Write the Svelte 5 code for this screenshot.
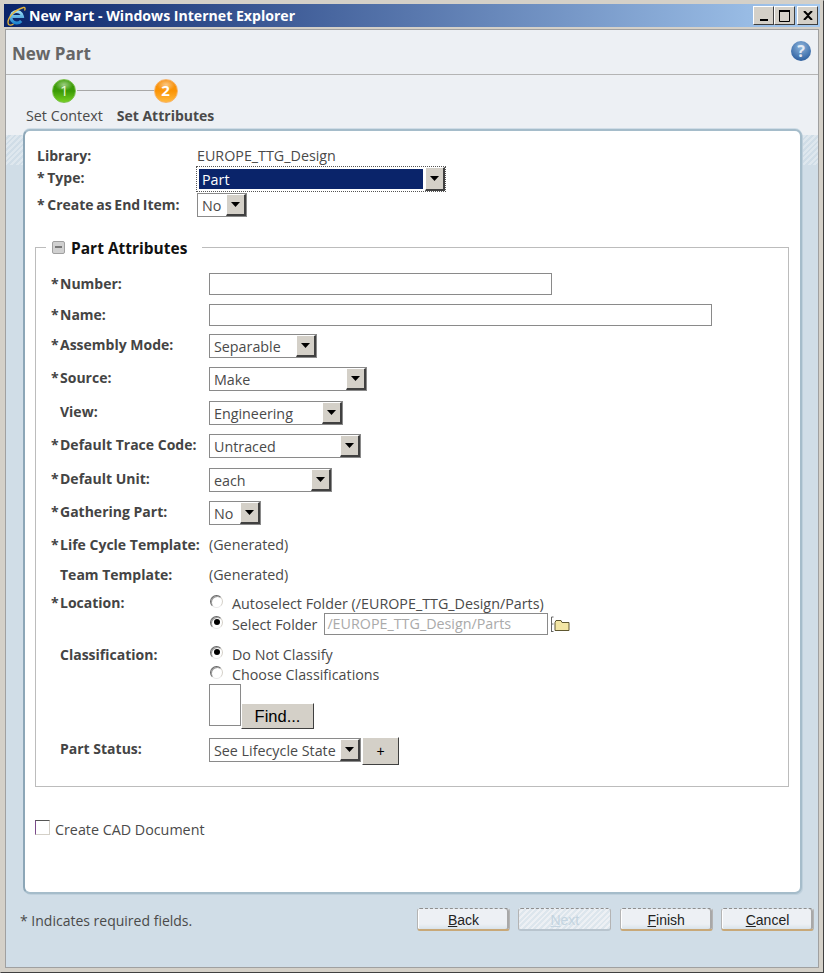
<script lang="ts">
	const attrs = [
		{ label: 'Assembly Mode:', req: true, value: 'Separable', width: 108 },
		{ label: 'Source:', req: true, value: 'Make', width: 158 },
		{ label: 'View:', req: false, value: 'Engineering', width: 134 },
		{ label: 'Default Trace Code:', req: true, value: 'Untraced', width: 152 },
		{ label: 'Default Unit:', req: true, value: 'each', width: 123 },
		{ label: 'Gathering Part:', req: true, value: 'No', width: 52 }
	];
</script>

{#snippet arrow()}
	<span class="arrow-btn"><svg width="9" height="5" viewBox="0 0 9 5"><path d="M0 0h9L4.500 5z" fill="#000" /></svg></span>
{/snippet}

{#snippet select(value: string, width: number)}
	<span class="select" style="width: {width}px"><span class="select-value">{value}</span>{@render arrow()}</span>
{/snippet}

{#snippet radio(on: boolean)}
	<span class="radio" class:on></span>
{/snippet}

<div class="window">
	<header class="titlebar">
		<svg class="ie" width="20" height="20" viewBox="0 0 20 20">
			<defs>
				<linearGradient id="ie-fill" x1="0" y1="0" x2="0" y2="1">
					<stop offset="0" stop-color="#9bdcf6" />
					<stop offset="1" stop-color="#1f86cf" />
				</linearGradient>
			</defs>
			<path d="M6 10.500h10.500A5.800 5.800 0 1 0 15.200 15" fill="none" stroke="url(#ie-fill)" stroke-width="3" />
			<path d="M2.500 18.500C0 13 8 4 17.500 1.500c2-.3 1.800 1.500 1 3M2.500 18.500c1.500 1 3.500.5 5-.5" fill="none" stroke="#e5b53c" stroke-width="1.300" />
		</svg>
		<span class="title-text">New Part - Windows Internet Explorer</span>
		<div class="win-buttons">
			<button class="win-btn" aria-label="Minimize"><svg width="10" height="11" viewBox="0 0 10 11"><path d="M1 9h8v2H1z" /></svg></button>
			<button class="win-btn" aria-label="Maximize"><svg width="12" height="12" viewBox="0 0 12 12"><path d="M.500 1.500h10v10H.500z" fill="none" stroke="#000" /><path d="M0 0h11v2H0z" /></svg></button>
			<button class="win-btn close" aria-label="Close"><svg width="10" height="9" viewBox="0 0 10 9"><path d="M1 0l4 4 4-4M1 9l4-4 4 4" fill="none" stroke="#000" stroke-width="2" /></svg></button>
		</div>
	</header>

	<div class="page">
		<div class="page-head">
			<h1>New Part</h1>
			<span class="help">?</span>
		</div>

		<div class="steps">
			<div class="step">
				<span class="ball green">1</span>
				<span class="step-label">Set Context</span>
			</div>
			<span class="step-line"></span>
			<div class="step current">
				<span class="ball orange">2</span>
				<span class="step-label">Set Attributes</span>
			</div>
		</div>

		<div class="body">
			<main class="panel">
				<div class="top-grid">
					<span class="label">Library:</span>
					<span class="text">EUROPE_TTG_Design</span>
					<span class="label pad">* Type:</span>
					<span class="focus-select"><span class="focus-value">Part</span>{@render arrow()}</span>
					<span class="label pad create">* Create as End Item:</span>
					<span class="top-select">{@render select('No', 50)}</span>
				</div>

				<fieldset class="attrs">
					<legend>
						<span class="collapse"></span>
						<span class="legend-text">Part Attributes</span>
					</legend>

					<div class="row row-input">
						<span class="label"><i>*</i>Number:</span>
						<span class="input" style="width: 343px"></span>
					</div>
					<div class="row row-input">
						<span class="label"><i>*</i>Name:</span>
						<span class="input" style="width: 503px"></span>
					</div>
					{#each attrs as attr (attr.label)}
						<div class="row row-select">
							<span class="label"><i>{attr.req ? '*' : ''}</i>{attr.label}</span>
							{@render select(attr.value, attr.width)}
						</div>
					{/each}
					<div class="row row-text first">
						<span class="label"><i>*</i>Life Cycle Template:</span>
						<span class="text">(Generated)</span>
					</div>
					<div class="row row-text">
						<span class="label"><i></i>Team Template:</span>
						<span class="text">(Generated)</span>
					</div>
					<div class="row row-location">
						<span class="label"><i>*</i>Location:</span>
						<div class="options">
							<div class="option">{@render radio(false)}<span class="text">Autoselect Folder (/EUROPE_TTG_Design/Parts)</span></div>
							<div class="option">
								{@render radio(true)}<span class="text">Select Folder</span>
								<span class="folder-input">/EUROPE_TTG_Design/Parts</span>
								<svg class="folder" width="20" height="17" viewBox="0 0 20 17">
									<path d="M.500 1v15M.500 1h2M.500 15.500h2M.500 8h2" fill="none" stroke="#666" />
									<path d="M4 6.500l1-2h5l1 2h7v8H4z" fill="#f3e6a4" stroke="#5f5730" />
								</svg>
							</div>
						</div>
					</div>
					<div class="row row-class">
						<span class="label"><i></i>Classification:</span>
						<div class="options">
							<div class="option">{@render radio(true)}<span class="text">Do Not Classify</span></div>
							<div class="option">{@render radio(false)}<span class="text">Choose Classifications</span></div>
							<div class="find">
								<span class="class-box"></span>
								<button class="raised find-btn">Find...</button>
							</div>
						</div>
					</div>
					<div class="row row-status">
						<span class="label"><i></i>Part Status:</span>
						<div class="status">
							{@render select('See Lifecycle State', 152)}
							<button class="raised plus">+</button>
						</div>
					</div>
				</fieldset>

				<div class="cad">
					<span class="checkbox"></span>
					<span class="text">Create CAD Document</span>
				</div>
			</main>

			<footer class="foot">
				<span class="note">* Indicates required fields.</span>
				<div class="actions">
					<button class="wiz-btn"><u>B</u>ack</button>
					<button class="wiz-btn off"><u>N</u>ext</button>
					<button class="wiz-btn"><u>F</u>inish</button>
					<button class="wiz-btn"><u>C</u>ancel</button>
				</div>
			</footer>
		</div>
	</div>
</div>

<style>
	:global(body) {
		margin: 0;
		background: #d4d0c8;
	}

	.window {
		width: 824px;
		height: 973px;
		box-sizing: border-box;
		display: flex;
		flex-direction: column;
		padding: 3px;
		background: #d4d0c8;
		border: 1px solid;
		border-color: #d4d0c8 #404040 #404040 #d4d0c8;
		font-family: 'Open Sans', 'Noto Sans', sans-serif;
		font-size: 14.3px;
		color: #4a4a4a;
	}

	.titlebar {
		height: 23px;
		flex: none;
		display: flex;
		align-items: center;
		background: linear-gradient(90deg, #0a246a, #a6caf0);
	}

	.ie {
		margin-left: 2px;
		flex: none;
	}

	.title-text {
		margin-left: 3px;
		font-weight: 700;
		font-size: 14.1px;
		color: #fff;
	}

	.win-buttons {
		margin-left: auto;
		margin-right: 2px;
		display: flex;
	}

	.win-btn {
		width: 21px;
		height: 19px;
		padding: 0;
		display: flex;
		align-items: center;
		justify-content: center;
		background: #d4d0c8;
		border: 1px solid;
		border-color: #fff #404040 #404040 #fff;
	}

	.close {
		margin-left: 2px;
	}

	.page {
		flex: 1;
		margin: 2px 1px 1px;
		display: flex;
		flex-direction: column;
		min-height: 0;
		background: #edf0f4;
		border: 1px solid #a0a0a0;
	}

	.page-head {
		height: 44px;
		flex: none;
		display: flex;
		align-items: center;
		justify-content: space-between;
		padding: 0 7px 0 6px;
		border-bottom: 1px solid #b4b4b4;
	}

	h1 {
		margin: 2px 0 0;
		font-size: 17px;
		font-weight: 700;
		color: #666;
	}

	.help {
		width: 20px;
		height: 20px;
		margin-bottom: 2px;
		border-radius: 50%;
		background: radial-gradient(circle at 50% 30%, #8fb6dd, #3a6ba8 70%, #24508c);
		color: #e3ebf4;
		font-weight: 700;
		font-size: 16px;
		line-height: 20px;
		text-align: center;
	}

	.steps {
		height: 54px;
		flex: none;
		display: flex;
		padding-left: 20px;
	}

	.step {
		display: flex;
		flex-direction: column;
		align-items: center;
		padding-top: 4px;
		position: relative;
	}

	.ball {
		width: 24px;
		height: 24px;
		box-sizing: border-box;
		border-radius: 50%;
		border: 1px solid;
		color: #fff;
		font-weight: 700;
		font-size: 15px;
		line-height: 21px;
		text-align: center;
	}

	.green {
		background:
			radial-gradient(ellipse 9px 6px at 50% 22%, rgba(255, 255, 255, 0.5), transparent),
			linear-gradient(#3d9c08, #3a9a05 50%, #76cf22);
		border-color: #7cc24c;
		font-weight: 400;
		color: #e9f7d8;
	}

	.orange {
		background:
			radial-gradient(ellipse 9px 6px at 50% 22%, rgba(255, 255, 255, 0.5), transparent),
			linear-gradient(#f59010, #fb9405 50%, #ffb93e);
		border-color: #f9b56a;
	}

	.step-label {
		margin-top: 3px;
	}

	.current .step-label {
		font-weight: 700;
		font-size: 14px;
	}

	.step-line {
		width: 78px;
		height: 1px;
		margin: 15px -38px 0 -26px;
		background: #a8a8a8;
	}

	.body {
		flex: 1;
		display: flex;
		flex-direction: column;
		padding: 0 16px 0 17px;
		background:
			linear-gradient(#edf0f4, #edf0f4) top / 100% 6px no-repeat,
			repeating-linear-gradient(135deg, rgba(255, 255, 255, 0.3) 0 2px, transparent 2px 4px) top / 100% 36px no-repeat,
			#d0dde7;
	}

	.panel {
		height: 765px;
		box-sizing: border-box;
		padding: 15px 11px 0 12px;
		background: #fff;
		border-radius: 7px;
		border: 2px solid #a5bcca;
		border-left-color: #8ca6b7;
		box-shadow: 1px 1px 0 #bfd0dc, 0 -1px 0 #d0dde7;
	}

	.label {
		font-size: 14px;
		font-weight: 700;
		color: #444;
		white-space: nowrap;
	}

	.text {
		white-space: nowrap;
	}

	.top-grid {
		display: grid;
		grid-template-columns: 160px 1fr;
		row-gap: 2px;
		align-items: start;
	}

	.top-grid .pad {
		padding-top: 1px;
		word-spacing: -1px;
	}

	.top-grid .create {
		padding-top: 2px;
	}

	.top-select {
		display: flex;
	}

	.focus-select {
		width: 248px;
		height: 24px;
		display: flex;
		outline: 1px dotted #555;
	}

	.focus-value {
		flex: 1;
		margin: 2px;
		padding-left: 3px;
		background: #0a246a;
		color: #fff;
		line-height: 22px;
	}

	.select {
		height: 24px;
		box-sizing: border-box;
		display: inline-flex;
		justify-content: space-between;
		background: #fff;
		border: 1px solid #8a8a8a;
	}

	.select-value {
		padding-left: 4px;
		line-height: 23px;
		white-space: nowrap;
	}

	.arrow-btn {
		width: 20px;
		flex: none;
		display: flex;
		align-items: center;
		justify-content: center;
		box-sizing: border-box;
		background: #d4d0c8;
		border: 1px solid;
		border-color: #fff #404040 #404040 #fff;
		border-width: 1px 2px 2px 1px;
	}

	.attrs {
		margin: 19px 0 0 -2px;
		padding: 15px 0 0 15px;
		height: 551px;
		box-sizing: border-box;
		border: 1px solid #bcbcbc;
	}

	legend {
		display: flex;
		align-items: center;
		gap: 6px;
		margin-left: -5px;
		padding: 0 15px 0 6px;
		font-size: 15.5px;
		font-weight: 700;
		color: #111;
	}

	.legend-text {
		margin: 1px 0 -1px;
	}

	.collapse {
		width: 11px;
		height: 11px;
		border-radius: 2px;
		background: linear-gradient(#777, #777) center / 7px 2px no-repeat, #d0d0d0;
		border: 1px solid #a0a0a0;
	}

	.row {
		display: grid;
		grid-template-columns: 158px 1fr;
		align-items: start;
	}

	.row .label {
		padding-top: 1px;
	}

	.label i {
		display: inline-block;
		width: 9px;
		font-style: normal;
	}

	.row-input {
		height: 30.5px;
	}

	.row-select {
		height: 33.4px;
	}

	.row-text {
		height: 28px;
	}

	.row-text.first {
		height: 29.5px;
	}

	.row-text .text {
		padding-top: 1px;
	}

	.input {
		display: block;
		height: 22px;
		box-sizing: border-box;
		background: #fff;
		border: 1px solid #8a8a8a;
	}

	.options {
		display: flex;
		flex-direction: column;
	}

	.row-location {
		height: 52.5px;
	}

	.row-location .options {
		margin-top: 1px;
	}

	.row-location .option {
		height: 21px;
	}

	.row-class {
		height: 94px;
	}

	.option {
		display: flex;
		align-items: center;
		height: 20px;
	}

	.radio {
		width: 13px;
		height: 13px;
		box-sizing: border-box;
		margin: 0 9px 4px 1px;
		border-radius: 50%;
		background: #fff;
		border: 1px solid;
		border-color: #666 #d4d0c8 #e8e8e8 #666;
		box-shadow: inset 1px 1px 0 #9a9a9a;
		position: relative;
	}

	.radio.on::after {
		content: '';
		position: absolute;
		inset: 2.500px;
		border-radius: 50%;
		background: #000;
	}

	.folder-input {
		width: 224px;
		height: 22px;
		box-sizing: border-box;
		margin-left: 7px;
		padding-left: 2px;
		background: #fff;
		border: 1px solid #8a8a8a;
		color: #aaa;
		line-height: 20px;
		white-space: nowrap;
	}

	.folder {
		margin-left: 3px;
	}

	.find {
		display: flex;
		align-items: flex-end;
	}

	.class-box {
		width: 32px;
		height: 42px;
		box-sizing: border-box;
		border: 1px solid #8a8a8a;
	}

	.raised {
		padding: 0;
		background: #d4d0c8;
		border: 1px solid;
		border-color: #fff #404040 #404040 #fff;
		font-family: 'Liberation Sans', sans-serif;
		font-size: 14px;
		color: #000;
	}

	.find-btn {
		width: 73px;
		height: 26px;
		margin-bottom: -3px;
		font-size: 16.5px;
	}

	.status {
		display: flex;
		align-items: flex-start;
	}

	.plus {
		width: 37px;
		height: 28px;
		margin: -1px 0 0 1px;
	}

	.cad {
		display: flex;
		align-items: center;
		gap: 5px;
		margin: 33px 0 0 -2px;
	}

	.checkbox {
		width: 15px;
		height: 15px;
		margin-bottom: 4px;
		box-sizing: border-box;
		background: #fff;
		border: 1px solid;
		border-color: #555 #d4d0c8 #d4d0c8 #7a4a8a;
	}

	.foot {
		display: flex;
		justify-content: space-between;
		align-items: center;
		padding-top: 14px;
		margin: 0 -12px 0 -3px;
	}

	.note {
		padding-top: 2px;
		font-size: 14px;
	}

	.actions {
		display: flex;
		gap: 8.33px;
	}

	.wiz-btn {
		width: 93px;
		height: 23px;
		padding: 1px 0 0;
		box-sizing: border-box;
		background: linear-gradient(#edf0f4 75%, #d9e3ea);
		border: 1px solid #b4b4b4;
		border-top: 1px dashed #8f8f8f;
		border-bottom: 2px solid #c8a878;
		border-radius: 3px;
		box-shadow: inset 1px 0 0 #fff, inset -2px 0 0 #a8a8a8;
		font-family: 'Liberation Sans', sans-serif;
		font-size: 14px;
		color: #222;
	}

	.off {
		color: #c4d4e0;
		background: repeating-linear-gradient(135deg, #dde6ed 0 2px, #edf0f4 2px 4px);
		border-bottom-color: #b8c4ce;
		box-shadow: none;
	}
</style>
